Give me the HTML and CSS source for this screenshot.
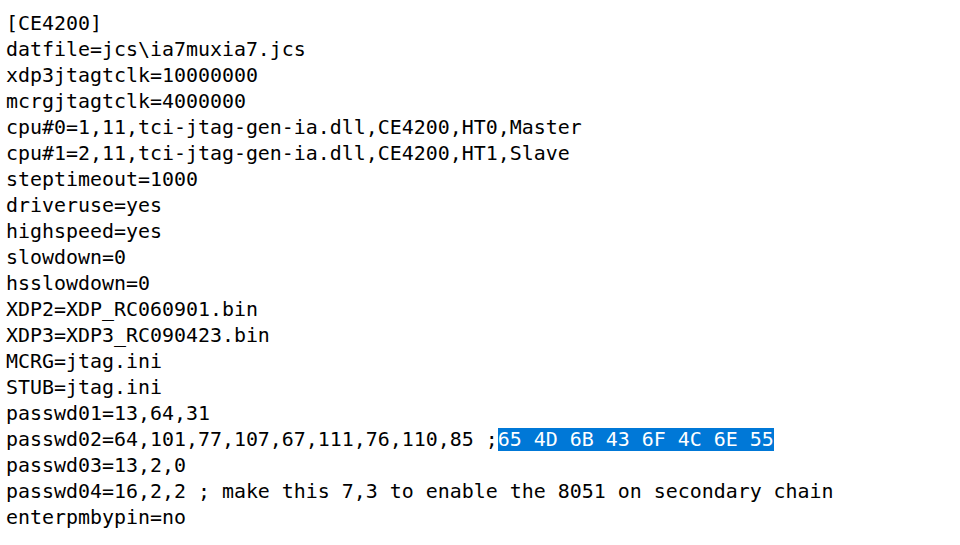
FILE: index.html
```html
<!DOCTYPE html>
<html>
<head>
<meta charset="utf-8">
<link rel="stylesheet" href="styles.css">
</head>
<body>
<pre class="editor">[CE4200]
datfile=jcs\ia7muxia7.jcs
xdp3jtagtclk=10000000
mcrgjtagtclk=4000000
cpu#0=1,11,tci-jtag-gen-ia.dll,CE4200,HT0,Master
cpu#1=2,11,tci-jtag-gen-ia.dll,CE4200,HT1,Slave
steptimeout=1000
driveruse=yes
highspeed=yes
slowdown=0
hsslowdown=0
XDP2=XDP_RC060901.bin
XDP3=XDP3_RC090423.bin
MCRG=jtag.ini
STUB=jtag.ini
passwd01=13,64,31
passwd02=64,101,77,107,67,111,76,110,85 ;<span class="sel">65 4D 6B 43 6F 4C 6E 55</span>
passwd03=13,2,0
passwd04=16,2,2 ; make this 7,3 to enable the 8051 on secondary chain
enterpmbypin=no</pre>
</body>
</html>
```
FILE: styles.css
```css
html, body {
  margin: 0;
  padding: 0;
  background: #ffffff;
}
.editor {
  margin: 0;
  padding: 11px 0 0 6px;
  font-family: "DejaVu Sans Mono", "Liberation Mono", monospace;
  font-size: 19.93px;
  line-height: 26px;
  color: #000000;
}
.sel {
  background: #0078d7;
  color: #ffffff;
}
```
